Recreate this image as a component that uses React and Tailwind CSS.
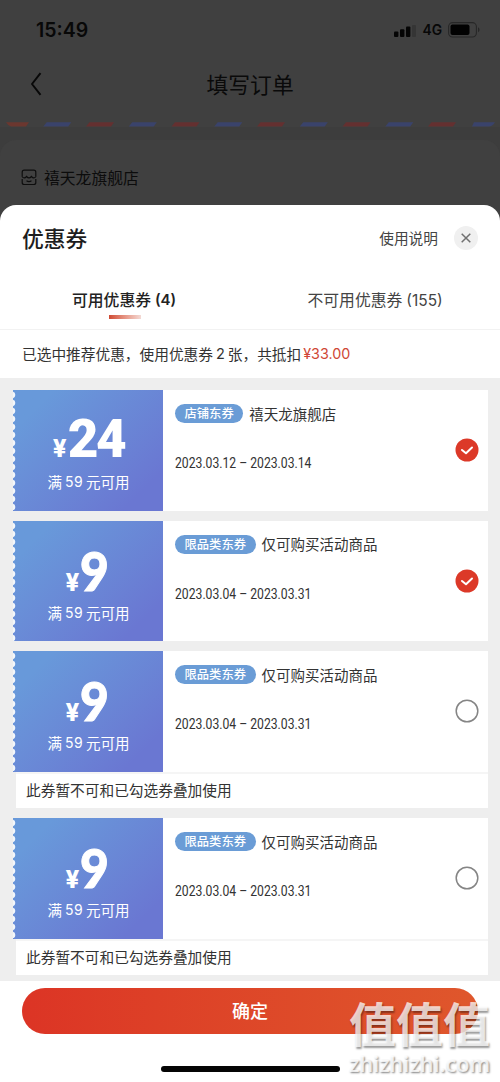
import React from 'react';

const cjk = "font-['Noto_Sans_CJK_SC',sans-serif]";
const inter = "font-['Inter','Noto_Sans_CJK_SC',sans-serif]";

const coupons = [
  { amount: '24', tag: '店铺东券', title: '禧天龙旗舰店', from: '2023.03.12', to: '2023.03.14', checked: true },
  { amount: '9', tag: '限品类东券', title: '仅可购买活动商品', from: '2023.03.04', to: '2023.03.31', checked: true },
  { amount: '9', tag: '限品类东券', title: '仅可购买活动商品', from: '2023.03.04', to: '2023.03.31', note: '此券暂不可和已勾选券叠加使用' },
  { amount: '9', tag: '限品类东券', title: '仅可购买活动商品', from: '2023.03.04', to: '2023.03.31', note: '此券暂不可和已勾选券叠加使用' },
];

function StatusBar() {
  return (
    <div className="flex h-[60px] items-center pr-[20px] pl-[36px]">
      <span className={`${inter} pt-[2px] text-[19.5px] leading-none font-semibold text-[#080808]`}>15:49</span>
      <svg className="mt-[2px] ml-auto" width="22" height="12" viewBox="0 0 22 12">
        <rect x="0" y="6.5" width="4.4" height="5.5" rx="1" fill="#050505" />
        <rect x="6" y="4.200" width="4.4" height="7.800" rx="1" fill="#050505" />
        <rect x="12" y="1.5" width="4.4" height="10.5" rx="1" fill="#050505" />
        <rect x="18" y="0" width="4" height="12" rx="1" fill="#353535" />
      </svg>
      <span className={`${inter} ml-[6px] pt-[2px] text-[13.800px] leading-none font-semibold text-[#080808]`}>4G</span>
      <svg className="ml-[6px]" width="32" height="16" viewBox="0 0 32 16">
        <rect x="0.6" y="0.6" width="27.8" height="14.4" rx="4" fill="none" stroke="#272727" strokeWidth="1.1" />
        <rect x="2.5" y="2.6" width="19" height="10.4" rx="2" fill="#020202" />
        <path d="M30 5.3c2 .9 2 4.1 0 5z" fill="#272727" />
      </svg>
    </div>
  );
}

function Stripes() {
  const items = [1, 2, 3, 4, 5, 6, 7, 8, 9, 10];
  return (
    <svg className="block" width="500" height="6" viewBox="0 0 500 6">
      <path d="M6 1.200h23l-3 4.300H11q-3-1-5-4.300z" fill="#6b372f" />
      {items.map((i) => (
        <path key={i} d={`M${4 + i * 42.75} 1.200h24.500l-3 4.300h-25z`} fill={i % 2 ? '#3a436b' : '#643030'} />
      ))}
      <path d="M474 1.200h21q-3 4.300-6 4.300h-17z" fill="#3a436b" />
    </svg>
  );
}

function Backdrop() {
  return (
    <div className="h-[205px] bg-[#404040]">
      <StatusBar />
      <div className="flex h-[61px] items-center px-[29px] pb-[13px]">
        <svg width="14" height="24" viewBox="0 0 14 24" fill="none" stroke="#080808" strokeWidth="2">
          <path d="M11.5 1.2 3 12l8.500 10.800" strokeLinejoin="round" />
        </svg>
        <h1 className={`${cjk} ml-[163.500px] pb-[1px] text-[21.8px] leading-none text-[#0a0a0a]`}>填写订单</h1>
      </div>
      <Stripes />
      <div className="h-[78px] bg-[#3d3d3d] pt-[13px]">
        <div className="flex h-[65px] items-start rounded-t-[16px] bg-[#404040] pt-[29px] pl-[21px]">
          <svg width="16" height="17" viewBox="0 0 16 17" fill="none" stroke="#0d0d0d" strokeWidth="1.200">
            <path d="M1.200 7.500V3.200q0-2 2-2h9.600q2 0 2 2v4.300M1.200 10v3.500q0 2 2 2h9.600q2 0 2-2V10" />
            <path d="M1 7.500q2.200 2.800 4.600 0 2.400 2.800 4.800 0 2.400 2.800 4.600 0M5.500 11.800q2.500 1.500 5 0" />
          </svg>
          <span className={`${cjk} ml-[7px] text-[15.800px] leading-[17px] text-[#0c0c0c]`}>禧天龙旗舰店</span>
        </div>
      </div>
    </div>
  );
}

function SheetHeader() {
  return (
    <div className="flex h-[66px] items-center pr-[22px] pl-[22px]">
      <h2 className={`${cjk} text-[21.8px] leading-none font-medium text-[#1d1d1d]`}>优惠券</h2>
      <span className={`${cjk} ml-auto text-[14.700px] leading-none text-[#444]`}>使用说明</span>
      <button className="ml-[16px] flex size-[24px] items-center justify-center rounded-full bg-[#f0f0f0]" aria-label="关闭">
        <svg width="10" height="10" viewBox="0 0 10 10" stroke="#707070" strokeWidth="1.500">
          <path d="m.7.7 8.600 8.600M9.300.7.700 9.300" />
        </svg>
      </button>
    </div>
  );
}

function Tabs() {
  return (
    <div className="flex h-[59px] border-b border-[#f2f2f2] pt-[20px] text-[15.800px] leading-[18px] whitespace-nowrap">
      <div className={`${cjk} flex w-[250px] flex-col items-start pl-[72px] font-medium text-[#222]`}>
        <span className="flex items-center">可用优惠券<span className={`${inter} ml-[4px] text-[15px] font-semibold`}>(4)</span></span>
        <span className="mt-[6px] ml-[37px] h-[4px] w-[32px] bg-linear-to-r from-[#cf4932] to-[#f3dad5]" />
      </div>
      <div className={`${cjk} flex items-start pl-[57.500px] text-[#444]`}>
        不可用优惠券<span className={`${inter} ml-[4px] pt-[1px] text-[15.500px]`}>(155)</span>
      </div>
    </div>
  );
}

function Check({ checked }) {
  return checked ? (
    <svg width="24" height="24" viewBox="0 0 24 24">
      <circle cx="12" cy="12" r="11.500" fill="#dc3928" />
      <path d="m7 12 4 3.300 6-5.800" fill="none" stroke="#fff" strokeWidth="2" strokeLinecap="round" strokeLinejoin="round" />
    </svg>
  ) : (
    <svg width="24" height="24" viewBox="0 0 24 24">
      <circle cx="12" cy="12" r="10.800" fill="#fff" stroke="#858585" strokeWidth="1.500" />
    </svg>
  );
}

function Perforation() {
  return (
    <svg className="block h-[120px] w-[4px] shrink-0" viewBox="0 0 4 120">
      {Array.from({ length: 15 }, (_, i) => (
        <circle key={i} cx="-1" cy={5 + i * 8} r="3.300" fill="#f3f7fb" />
      ))}
    </svg>
  );
}

function Coupon({ amount, tag, title, from, to, checked, note }) {
  return (
    <article>
      <div className="flex h-[120.500px] bg-white">
        <div className="flex w-[150px] bg-linear-135 from-[#6899da] from-15% to-[#6a77d2] to-85% text-white">
          <Perforation />
          <div className="flex flex-1 flex-col items-center pr-[3px]">
            <div className="mt-[23px] flex h-[53px] items-baseline leading-[53px]">
              <span className={`${inter} mr-[1px] text-[24px] font-extrabold`}>¥</span>
              {amount === '9' ? (
                <span className="inline-block origin-left scale-x-[0.92] font-['Lato',sans-serif] text-[54px] font-black [-webkit-text-stroke:1px_white]">9</span>
              ) : (
                <span className="font-['Roboto',sans-serif] text-[53px] font-black tracking-[-2.500px]">{amount}</span>
              )}
            </div>
            <div className={`${cjk} mt-[7px] flex items-center text-[14.500px] leading-[18px] whitespace-nowrap`}>
              满<span className={`${inter} mx-[3px] text-[14px] tracking-[0.500px]`}>59</span>元可用
            </div>
          </div>
        </div>
        <div className="flex flex-1 items-center pr-[9px] pl-[12px]">
          <div className="flex h-full flex-1 flex-col items-start pt-[14px]">
            <div className="flex items-center whitespace-nowrap">
              <span className={`${cjk} flex h-[19px] items-center rounded-full bg-[#6a9cd6] px-[9.500px] text-[12.300px] leading-none font-medium text-white`}>{tag}</span>
              <span className={`${cjk} ml-[6px] pb-[1px] text-[14.500px] leading-[17px] text-[#333]`}>{title}</span>
            </div>
            <span className="mt-[31px] inline-block origin-left scale-x-[0.87] font-['Roboto',sans-serif] text-[14px] leading-[18px] whitespace-nowrap text-[#333]">
              {from} – {to}
            </span>
          </div>
          <Check checked={checked} />
        </div>
      </div>
      {note && (
        <p className={`${cjk} ml-[3px] h-[36.500px] border-t-2 border-[#f5f5f5] bg-white pl-[10px] text-[14.700px] leading-[31px] text-[#333]`}>{note}</p>
      )}
    </article>
  );
}

function Watermark() {
  return (
    <div className="pointer-events-none absolute top-[992px] left-[349px] flex flex-col whitespace-nowrap">
      <span className={`${cjk} text-[47px] leading-[60px] font-bold text-white/75 [text-shadow:1px_2px_2px_rgba(0,0,0,0.400)]`}>值值值</span>
      <span className="font-['Open_Sans',sans-serif] text-[21.700px] leading-[24px] font-semibold text-white/80 [text-shadow:1px_1px_2px_rgba(0,0,0,0.500)]">zhizhizhi.com</span>
    </div>
  );
}

export default function App() {
  return (
    <main className="relative h-[1082px] w-[500px] overflow-hidden bg-[#404040]">
      <Backdrop />
      <section className="flex h-[877px] flex-col rounded-t-[16px] bg-white">
        <SheetHeader />
        <Tabs />
        <p className={`${cjk} flex h-[48px] items-center pl-[22px] text-[14.700px] leading-none whitespace-nowrap text-[#333]`}>
          已选中推荐优惠，使用优惠券
          <span className={`${inter} mx-[3px] text-[14.500px]`}>2</span>
          张，共抵扣
          <span className={`${inter} ml-[2px] text-[14.300px] text-[#cf4635]`}>¥33.00</span>
        </p>
        <div className="flex h-[603px] flex-col gap-[10px] bg-[#eeeeee] pt-[12px] pr-[12px] pl-[13px]">
          {coupons.map((coupon, i) => (
            <Coupon key={i} {...coupon} />
          ))}
        </div>
        <footer className="flex flex-1 flex-col items-center bg-white pt-[7px]">
          <button className={`${cjk} h-[46px] w-[456px] rounded-full bg-linear-to-r from-[#dc3425] to-[#df572c] pb-[2px] text-[18px] font-medium text-white`}>确定</button>
          <div className="mt-[32px] h-[6px] w-[179px] rounded-full bg-[#050505]" />
        </footer>
      </section>
      <Watermark />
    </main>
  );
}
